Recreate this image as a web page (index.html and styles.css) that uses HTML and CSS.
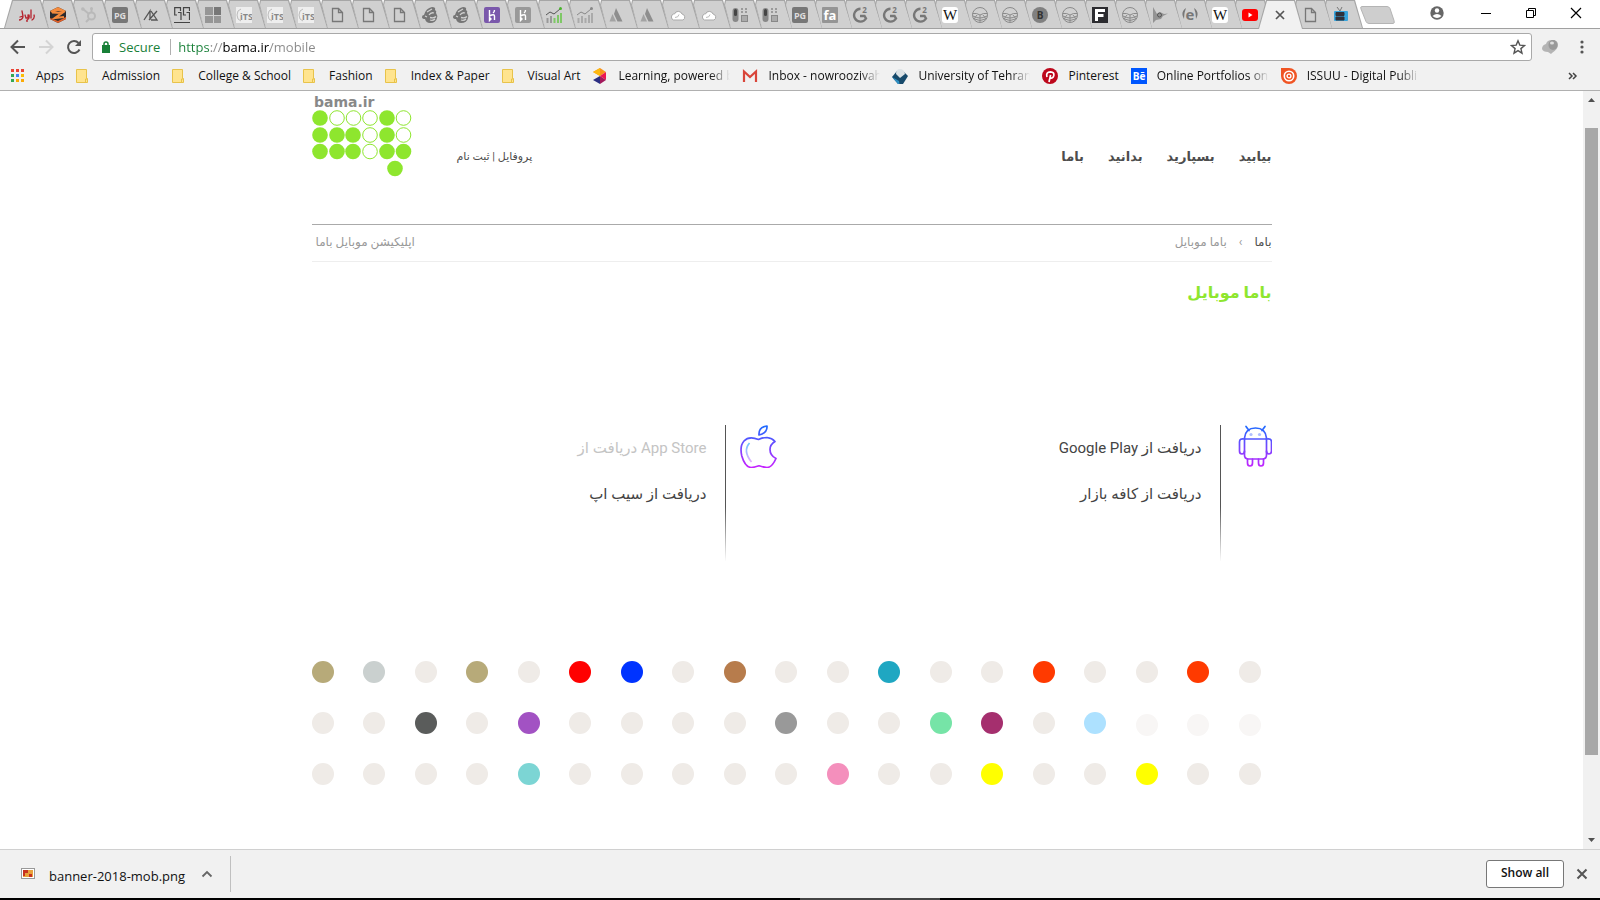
FILE: index.html
```html
<!DOCTYPE html>
<html lang="fa">
<head>
<meta charset="utf-8">
<title>باما موبایل</title>
<link rel="stylesheet" href="styles.css">
</head>
<body>
<svg class="defs" aria-hidden="true">
  <defs>
    <linearGradient id="violet" gradientUnits="userSpaceOnUse" x1="0" y1="0" x2="0" y2="43"><stop offset="0" stop-color="#1a6dff"/><stop offset="1" stop-color="#c822ff"/></linearGradient>
    <linearGradient id="sky" x1="0" y1="0" x2="0" y2="1"><stop offset="0" stop-color="#6dc7ff"/><stop offset="1" stop-color="#e6abff"/></linearGradient>
    <symbol id="i-divar" viewBox="0 0 16 16"><g fill="none" stroke="#b5232d" stroke-width="1.300" stroke-linecap="round"><path d="M3 4l1 5-3 1M0 13q3 0 4-3M6 8l1 3h2l0-3M10 8q1 4-2 5M12 3v8M15 8q1 3-2 5"/></g><circle cx="8" cy="14" r=".900" fill="#b5232d"/></symbol>
    <symbol id="i-z" viewBox="0 0 16 16"><path d="M8 0l8 4v8l-8 4-8-4V4z" fill="#2b2a2e"/><path d="M8 0l8 4-2 1.500L8 4 2 6 0 4z" fill="#f58a3c"/><path d="M2 5.500l10 .500-7 5 9-1" fill="none" stroke="#f58a3c" stroke-width="2.200"/><path d="M0 11l8 3 8-4v2l-8 4-8-4z" fill="#e2622b"/></symbol>
    <symbol id="i-hub" viewBox="0 0 16 16"><g fill="none" stroke="#b9b9b9" stroke-width="2"><circle cx="10.500" cy="9" r="3.500"/><path d="M10.500 5V1M8 7L2 2M8 12l-3 3"/></g><circle cx="1.800" cy="2" r="1.800" fill="#b9b9b9"/><circle cx="10.500" cy="1.500" r="1.500" fill="#b9b9b9"/></symbol>
    <symbol id="i-pg" viewBox="0 0 16 16"><rect width="16" height="16" rx="2" fill="#777"/><text x="8" y="11.500" class="glyph" font-size="9" fill="#ddd">PG</text></symbol>
    <symbol id="i-ax" viewBox="0 0 16 16"><path d="M1 13L7 4v9M6 13l8-9M8 4l6 9H8" fill="none" stroke="#555" stroke-width="1.300"/></symbol>
    <symbol id="i-gg" viewBox="0 0 16 16"><path d="M6.500 4V.700H.700V8H3M4 5.500h3V13M15.500 4V.700H9.500V8H12M12.500 5.500h3V13M0 15.500h16" fill="none" stroke="#444" stroke-width="1.200"/></symbol>
    <symbol id="i-win" viewBox="0 0 16 16"><path d="M0 0h8v8H0zM9 9h7v7H9zM0 9h8v7H0z" fill="#969696"/><path d="M9 0h7v8H9z" fill="#777"/></symbol>
    <symbol id="i-its" viewBox="0 0 16 16"><rect width="16" height="16" fill="#eee"/><path d="M5 2Q1 3 1 8t4 6" fill="none" stroke="#bbb"/><text x="10.500" y="13" class="glyph" font-size="9" fill="#888">iTS</text></symbol>
    <symbol id="i-doc" viewBox="0 0 16 16"><path d="M3.500 1.500h6l4 4v9h-10zM9.500 1.500v4h4" fill="none" stroke="#777" stroke-width="1.300"/></symbol>
    <symbol id="i-chimp" viewBox="0 0 16 16"><path d="M2 8Q4 1 10 0q4 0 3 3 2 1 1 3 2 3 1 5-1 5-7 5-4 0-5-4-3 0-3-2 0-2 2-2z" fill="#757575"/><path d="M7 8q2-3 5-2M8 10.500q4 1 6-1M8 13q3 1 5-1M5 5l5-3M3 9l2 1" stroke="#d0d0d0" stroke-width="1.300" fill="none"/></symbol>
    <symbol id="i-heroku" viewBox="0 0 16 16"><rect width="16" height="16" rx="2" fill="#7a58ab"/><path d="M5.500 3v6q5-2.500 5 0v4M10.500 3q0 2-1.500 3M5.500 10.500v3l1.500-1.500z" fill="none" stroke="#fff" stroke-width="1.400"/></symbol>
    <symbol id="i-heroku-grey" viewBox="0 0 16 16"><rect width="16" height="16" rx="2" fill="#999"/><path d="M5.500 3v6q5-2.500 5 0v4M10.500 3q0 2-1.500 3M5.500 10.500v3l1.500-1.500z" fill="none" stroke="#fff" stroke-width="1.400"/></symbol>
    <symbol id="i-chart" viewBox="0 0 16 16"><path d="M1.500 16v-5M5 16V9" stroke="#999" stroke-width="2"/><path d="M8.500 16v-5M12 16V8M15 16V6" stroke="#7fc867" stroke-width="2"/><path d="M0 8l4-3 4 2 6-5" fill="none" stroke="#555"/><circle cx="14.500" cy="1.500" r="1.500" fill="#49b52b"/></symbol>
    <symbol id="i-chart-grey" viewBox="0 0 16 16"><path d="M1.500 16v-5M5 16V9M8.500 16v-5M12 16V8M15 16V6" stroke="#aaa" stroke-width="2"/><path d="M0 8l4-3 4 2 6-5" fill="none" stroke="#888"/><circle cx="14.500" cy="1.500" r="1.500" fill="#888"/></symbol>
    <symbol id="i-peak" viewBox="0 0 16 16"><path d="M8 1l6.500 13.500h-5L6 7z" fill="#8e8e8e"/><path d="M4.500 7L8 14.500H1.500z" fill="#a3a3a3"/></symbol>
    <symbol id="i-cloud" viewBox="0 0 16 16"><path d="M3.500 13a3.200 3.200 0 0 1 0-6h1a4 4 0 0 1 7.500 0 3.200 3.200 0 0 1 1 6z" fill="#fff" stroke="#aaa"/><path d="M5 10.500q3.500 0 4-3" fill="none" stroke="#bbb"/></symbol>
    <symbol id="i-remote" viewBox="0 0 16 16"><rect x=".500" y="1" width="6" height="14" rx="3" fill="#888"/><rect x="2" y="2" width="3" height="7" rx="1.500" fill="#444"/><path d="M9 2h2M13 2h2M9 5h2M13 5h2" stroke="#888" stroke-width="1.500"/><rect x="9.500" y="8.500" width="6" height="6" fill="#aaa" stroke="#888"/></symbol>
    <symbol id="i-fa" viewBox="0 0 16 16"><rect width="16" height="16" rx="1" fill="#959595"/><text x="8" y="12.500" class="glyph" font-size="13" fill="#fff">fa</text></symbol>
    <symbol id="i-g2" viewBox="0 0 16 16"><path d="M8.500 1.800A6.400 6.400 0 1 0 14 11.500L12.500 9H8" fill="none" stroke="#777" stroke-width="2.400"/><text x="12.500" y="5.500" class="glyph" font-size="8" fill="#777">2</text></symbol>
    <symbol id="i-w" viewBox="0 0 16 16"><rect width="16" height="16" rx="3" fill="#fff"/><text x="8" y="13" class="glyph-serif" font-size="15" fill="#111">W</text></symbol>
    <symbol id="i-globe" viewBox="0 0 16 16"><g fill="none" stroke="#8a8a8a"><circle cx="8" cy="8" r="7.500"/><path d="M.500 6.500h4q3.500 3 7 0h4M1 9q7 4 14 0M2.500 12q5.500 3 11 0M5 8l-3 4M11 8l3 4M8 8v7"/></g></symbol>
    <symbol id="i-b" viewBox="0 0 16 16"><circle cx="8" cy="8" r="8" fill="#808080"/><text x="8" y="12" class="glyph" font-size="10" fill="#333">B</text></symbol>
    <symbol id="i-f" viewBox="0 0 16 16"><rect width="16" height="16" fill="#2c2c30"/><path d="M4.500 14V3.500H13M4.500 8.500h7" fill="none" stroke="#fff" stroke-width="3"/></symbol>
    <symbol id="i-gnu" viewBox="0 0 16 16"><path d="M1 0l4 7 3-2 4 2 4-.500-5 2.500-2 3-5 1-3 3V9z" fill="#949494"/><circle cx="7.500" cy="8" r="2" fill="none" stroke="#555"/></symbol>
    <symbol id="i-e" viewBox="0 0 16 16"><text x="8" y="13" class="glyph" font-size="15" fill="#777">e</text><path d="M4 1Q-2 5 2 12L2.500 6zM12 1q6 4 2 11l-.500-6z" fill="#777"/></symbol>
    <symbol id="i-yt" viewBox="0 0 16 16"><rect x="0" y="2" width="16" height="12" rx="3" fill="#f00"/><path d="M6.500 5.500v5l4-2.500z" fill="#fff"/></symbol>
    <symbol id="i-x" viewBox="0 0 16 16"><path d="M4 4l8 8M12 4l-8 8" stroke="#555" stroke-width="1.700"/></symbol>
    <symbol id="i-tv" viewBox="0 0 16 16"><path d="M5 0l3 4 2-4" fill="none" stroke="#777"/><rect x="2" y="4" width="14" height="10" rx="1" fill="#37a4dc"/><path d="M4 5.500h8v3H4zM4 10h8v3H4z" fill="#303038" stroke="#303038"/></symbol>
    <symbol id="i-folder" viewBox="0 0 16 16"><path d="M.500 1.500h10v9h1v4H.500z" fill="#ffe48f" stroke="#e8c34a"/><path d="M9.500 14v-3h1.500" fill="none" stroke="#e8c34a"/></symbol>
  </defs>
</svg>

<header class="browser">
  <div class="strip">
    <nav class="tabs" aria-label="Tabs">
      <button class="tab first" aria-label="Divar"><svg><use href="#i-divar"/></svg></button>
      <button class="tab" aria-label="Z"><svg><use href="#i-z"/></svg></button>
      <button class="tab" aria-label="Hub"><svg><use href="#i-hub"/></svg></button>
      <button class="tab" aria-label="PG"><svg><use href="#i-pg"/></svg></button>
      <button class="tab" aria-label="AX"><svg><use href="#i-ax"/></svg></button>
      <button class="tab" aria-label="GG"><svg><use href="#i-gg"/></svg></button>
      <button class="tab" aria-label="Tiles"><svg><use href="#i-win"/></svg></button>
      <button class="tab" aria-label="ITS"><svg><use href="#i-its"/></svg></button>
      <button class="tab" aria-label="ITS"><svg><use href="#i-its"/></svg></button>
      <button class="tab" aria-label="ITS"><svg><use href="#i-its"/></svg></button>
      <button class="tab" aria-label="Page"><svg><use href="#i-doc"/></svg></button>
      <button class="tab" aria-label="Page"><svg><use href="#i-doc"/></svg></button>
      <button class="tab" aria-label="Page"><svg><use href="#i-doc"/></svg></button>
      <button class="tab" aria-label="Mail"><svg><use href="#i-chimp"/></svg></button>
      <button class="tab" aria-label="Mail"><svg><use href="#i-chimp"/></svg></button>
      <button class="tab" aria-label="Heroku"><svg><use href="#i-heroku"/></svg></button>
      <button class="tab" aria-label="Heroku"><svg><use href="#i-heroku-grey"/></svg></button>
      <button class="tab" aria-label="Chart"><svg><use href="#i-chart"/></svg></button>
      <button class="tab" aria-label="Chart"><svg><use href="#i-chart-grey"/></svg></button>
      <button class="tab" aria-label="Peak"><svg><use href="#i-peak"/></svg></button>
      <button class="tab" aria-label="Peak"><svg><use href="#i-peak"/></svg></button>
      <button class="tab" aria-label="Cloud"><svg><use href="#i-cloud"/></svg></button>
      <button class="tab" aria-label="Cloud"><svg><use href="#i-cloud"/></svg></button>
      <button class="tab" aria-label="Remote"><svg><use href="#i-remote"/></svg></button>
      <button class="tab" aria-label="Remote"><svg><use href="#i-remote"/></svg></button>
      <button class="tab" aria-label="PG"><svg><use href="#i-pg"/></svg></button>
      <button class="tab" aria-label="fa"><svg><use href="#i-fa"/></svg></button>
      <button class="tab" aria-label="G2"><svg><use href="#i-g2"/></svg></button>
      <button class="tab" aria-label="G2"><svg><use href="#i-g2"/></svg></button>
      <button class="tab" aria-label="G2"><svg><use href="#i-g2"/></svg></button>
      <button class="tab" aria-label="Wikipedia"><svg><use href="#i-w"/></svg></button>
      <button class="tab" aria-label="Globe"><svg><use href="#i-globe"/></svg></button>
      <button class="tab" aria-label="Globe"><svg><use href="#i-globe"/></svg></button>
      <button class="tab" aria-label="B"><svg><use href="#i-b"/></svg></button>
      <button class="tab" aria-label="Globe"><svg><use href="#i-globe"/></svg></button>
      <button class="tab" aria-label="F"><svg><use href="#i-f"/></svg></button>
      <button class="tab" aria-label="Globe"><svg><use href="#i-globe"/></svg></button>
      <button class="tab" aria-label="Bird"><svg><use href="#i-gnu"/></svg></button>
      <button class="tab" aria-label="e"><svg><use href="#i-e"/></svg></button>
      <button class="tab" aria-label="Wikipedia"><svg><use href="#i-w"/></svg></button>
      <button class="tab" aria-label="YouTube"><svg><use href="#i-yt"/></svg></button>
      <button class="tab active" aria-label="Close tab"><svg><use href="#i-x"/></svg></button>
      <button class="tab" aria-label="Page"><svg><use href="#i-doc"/></svg></button>
      <button class="tab" aria-label="TV"><svg><use href="#i-tv"/></svg></button>
    </nav>
    <button class="new-tab" aria-label="New tab"><svg viewBox="0 0 35 18"><path d="M2 .500h25q2 0 3 2l4 12q1 3-1 3H9q-2 0-3-2L1 3Q0 .500 2 .500z" fill="#cecece" stroke="#b4b4b4"/></svg></button>
    <div class="window-buttons">
      <button aria-label="Profile"><svg viewBox="0 0 16 16"><circle cx="8" cy="8" r="6.700" fill="#666"/><circle cx="8" cy="5.500" r="2.200" fill="#fff"/><path d="M3.500 11q4.500-4 9 0-4.500 4-9 0z" fill="#fff"/></svg></button>
      <button aria-label="Minimize"><svg viewBox="0 0 16 16"><path d="M3 8.500h10" stroke="#000"/></svg></button>
      <button aria-label="Restore"><svg viewBox="0 0 16 16"><path d="M3.500 5.500h7v7h-7zM5.500 5V3.500h7v7H11" fill="none" stroke="#000"/></svg></button>
      <button aria-label="Close"><svg viewBox="0 0 16 16"><path d="M3 3l10 10M13 3L3 13" stroke="#000" stroke-width="1.200"/></svg></button>
    </div>
  </div>

  <div class="toolbar">
    <button aria-label="Back"><svg viewBox="0 0 16 16"><path d="M15 8H2M8 1.500L1.500 8 8 14.500" fill="none" stroke="#555" stroke-width="2"/></svg></button>
    <button aria-label="Forward"><svg viewBox="0 0 16 16"><path d="M1 8h13M8 1.500L14.500 8 8 14.500" fill="none" stroke="#d4d4d4" stroke-width="2"/></svg></button>
    <button aria-label="Reload"><svg viewBox="0 0 16 16"><path d="M13.500 10.500a6 6 0 1 1-1-6.500" fill="none" stroke="#555" stroke-width="2"/><path d="M15 1v6H9z" fill="#555"/></svg></button>
    <form class="omnibox">
      <svg class="lock" viewBox="0 0 10 14"><rect x="1" y="5" width="8" height="8" fill="#188038"/><path d="M3 6V4a2 2 0 0 1 4 0v2" fill="none" stroke="#188038" stroke-width="1.500"/></svg>
      <label class="secure" for="address">Secure</label>
      <input id="address" class="address" type="text" value="https://bama.ir/mobile">
      <button type="button" class="star" aria-label="Bookmark"><svg viewBox="0 0 16 16"><path d="M8 1.800l1.800 4.300 4.700.400-3.600 3.100 1.100 4.600L8 11.700l-4 2.500 1.100-4.600L1.500 6.500l4.700-.400z" fill="none" stroke="#555" stroke-width="1.400"/></svg></button>
    </form>
    <button aria-label="Extension"><svg viewBox="0 0 16 16"><path d="M0 10q0-4 4-5 1-4 6-4 6 0 6 5 0 4-6 8l-1 1-3-2q-5 0-6-3z" fill="#b4b4b4"/><ellipse cx="11" cy="6" rx="4.500" ry="5" fill="#999"/><ellipse cx="10" cy="4" rx="2" ry="1.500" fill="#ddd"/></svg></button>
    <button class="menu" aria-label="Menu"><svg viewBox="0 0 16 16"><g fill="#555"><circle cx="8" cy="3" r="1.600"/><circle cx="8" cy="8" r="1.600"/><circle cx="8" cy="13" r="1.600"/></g></svg></button>
  </div>

  <nav class="bookmarks" aria-label="Bookmarks">
    <a href="#"><svg viewBox="0 0 16 16"><path d="M1 1h3v3H1zM6 1h3v3H6zM11 1h3v3h-3z" fill="#ea4335"/><path d="M1 6h3v3H1z" fill="#34a853"/><path d="M6 6h3v3H6z" fill="#4285f4"/><path d="M11 6h3v3h-3z" fill="#fbbc05"/><path d="M1 11h3v3H1z" fill="#34a853"/><path d="M6 11h3v3H6zM11 11h3v3h-3z" fill="#fbaa05"/></svg><span>Apps</span></a>
    <a href="#"><svg><use href="#i-folder"/></svg><span>Admission</span></a>
    <a href="#"><svg><use href="#i-folder"/></svg><span>College &amp; School</span></a>
    <a href="#"><svg><use href="#i-folder"/></svg><span>Fashion</span></a>
    <a href="#"><svg><use href="#i-folder"/></svg><span>Index &amp; Paper</span></a>
    <a href="#"><svg><use href="#i-folder"/></svg><span>Visual Art</span></a>
    <a href="#"><svg viewBox="0 0 16 16"><path d="M8 0l6 4-6 4-7-4z" fill="#f7941d"/><path d="M8 0v8L1 4z" fill="#fdb913"/><path d="M14 4v8l-6-4z" fill="#ed1651"/><path d="M8 8l6 4-6 4z" fill="#a3195b"/><path d="M8 8v8l-7-4z" fill="#2b2e83"/></svg><span class="fade">Learning, powered b</span></a>
    <a href="#"><svg viewBox="0 0 16 16"><path d="M2 3h12v11H2z" fill="#f1f1f1"/><path d="M2 14V3.500l6 5.500 6-5.500V14" fill="none" stroke="#d9453a" stroke-width="2.200"/></svg><span class="fade">Inbox - nowroozivah</span></a>
    <a href="#"><svg viewBox="0 0 16 16"><path d="M0 9l5-6h6l5 5-5 8H6z" fill="#174a6b"/><path d="M0 9l7 4 .500 3H6z" fill="#2e90c4"/><path d="M4 6q0-5 4-5t5 5l-5 4z" fill="#dde3e6"/></svg><span class="fade">University of Tehran</span></a>
    <a href="#"><svg viewBox="0 0 16 16"><circle cx="8" cy="8" r="8" fill="#bd081c"/><path d="M7 14l1.600-7M5 9Q3.500 4 8.500 3.800q4 .200 3.300 3.700Q11 11 8 9.800" fill="none" stroke="#fff" stroke-width="1.700"/></svg><span>Pinterest</span></a>
    <a href="#"><svg viewBox="0 0 16 16"><rect width="16" height="16" fill="#0057ff"/><text x="8" y="12" class="glyph" font-size="10" fill="#fff">Bē</text></svg><span class="fade">Online Portfolios on</span></a>
    <a href="#"><svg viewBox="0 0 16 16"><path d="M0 0h8a8 8 0 1 1-8 8z" fill="#f05423"/><circle cx="8" cy="8" r="4.700" fill="none" stroke="#fff" stroke-width="1.600"/><circle cx="8" cy="8" r="1.900" fill="none" stroke="#fff" stroke-width="1.400"/></svg><span class="fade">ISSUU - Digital Publi</span></a>
    <button class="more" aria-label="More bookmarks"><svg viewBox="0 0 16 16"><path d="M4 5l3 3-3 3M8 5l3 3-3 3" fill="none" stroke="#444" stroke-width="1.500"/></svg></button>
  </nav>
</header>

<div class="viewport">
  <div class="page" dir="rtl">
    <header class="site-head">
      <nav class="menu-main">
        <a href="#">بیابید</a><a href="#">بسپارید</a><a href="#">بدانید</a><a href="#">باما</a>
      </nav>
      <div class="account"><a href="#">پروفایل</a> | <a href="#">ثبت نام</a></div>
      <a class="logo" href="#" aria-label="bama.ir">
        <svg viewBox="0 0 100 82">
          <text x="2" y="12" class="logo-name">bama.ir</text>
          <g fill="#8ee62e">
            <circle cx="8" cy="23" r="7.800"/><circle cx="75" cy="23" r="7.800"/>
            <circle cx="8" cy="40" r="7.800"/><circle cx="25" cy="40" r="7.800"/><circle cx="41" cy="40" r="7.800"/><circle cx="75" cy="40" r="7.800"/>
            <circle cx="8" cy="56.500" r="7.800"/><circle cx="25" cy="56.500" r="7.800"/><circle cx="41" cy="56.500" r="7.800"/><circle cx="75" cy="56.500" r="7.800"/><circle cx="91.500" cy="56.500" r="7.800"/>
            <circle cx="83" cy="73.500" r="7.800"/>
          </g>
          <g fill="none" stroke="#8ee62e">
            <circle cx="25" cy="23" r="7.300"/><circle cx="41.500" cy="23" r="7.300"/><circle cx="58" cy="23" r="7.300"/><circle cx="91.500" cy="23" r="7.300"/>
            <circle cx="58" cy="40" r="7.300"/><circle cx="91.500" cy="40" r="7.300"/><circle cx="58" cy="56.500" r="7.300"/>
          </g>
        </svg>
      </a>
    </header>

    <div class="crumbs">
      <nav><a href="#" class="home">باما</a><span class="sep">›</span><span>باما موبایل</span></nav>
      <span class="section">اپلیکیشن موبایل باما</span>
    </div>

    <h1>باما موبایل</h1>

    <main class="stores">
      <section class="store">
        <svg class="store-icon" viewBox="-2 0 37 43"><g fill="none" stroke="url(#violet)" stroke-width="1.700" stroke-linecap="round" stroke-linejoin="round"><path d="M9 1.500l3 4M28 1.500l-3 4M7.500 14V13Q8.500 3 18.500 3t11 10v1M7.500 14h22v16q0 4-4 4h-14q-4 0-4-4z"/><path d="M7.500 14q-5-1-5 3v9q0 3 2.500 3 2.500 0 2.500-3M29.500 14q5-1 5 3v9q0 3-2.500 3-2.500 0-2.500-3M10.500 34v4q0 3 2.500 3t2.500-3v-4M21.500 34v4q0 3 2.500 3t2.500-3v-4"/></g><circle cx="14" cy="9.500" r="1.600" fill="#b0bfff"/><circle cx="22.500" cy="9.500" r="1.600" fill="#b0bfff"/></svg>
        <div class="links"><a href="#">دریافت از Google Play</a><a href="#">دریافت از کافه بازار</a></div>
      </section>
      <section class="store">
        <svg class="store-icon" viewBox="0 0 37 43"><g fill="none" stroke="url(#violet)" stroke-width="1.700" stroke-linejoin="round"><path d="M19 10q-.500-8 8-9 .500 7-8 9z"/><path d="M18.500 14.500q4-2 8.500-2 5 .500 8 4-5 3-5 8 0 6 6 9-4 9-9 9-3 0-8-1.700Q14 42.500 11 42.500 5 42 1.800 31-.500 21 4 16q5-5.500 14.500-1.500z"/></g><path d="M9.500 18q-7 8 2 19" fill="none" stroke="url(#sky)" stroke-width="1.700"/></svg>
        <div class="links"><a href="#" class="off" dir="ltr">دریافت از App Store</a><a href="#">دریافت از سیب اپ</a></div>
      </section>
    </main>

    <div class="dots" dir="ltr" aria-hidden="true">
      <i class="khaki"></i><i class="silver"></i><i></i><i class="khaki"></i><i></i><i class="red"></i><i class="blue"></i><i></i><i class="brown"></i><i></i><i></i><i class="teal"></i><i></i><i></i><i class="orange"></i><i></i><i></i><i class="orange"></i><i></i>
      <i></i><i></i><i class="slate"></i><i></i><i class="purple"></i><i></i><i></i><i></i><i></i><i class="grey"></i><i></i><i></i><i class="mint"></i><i class="plum"></i><i></i><i class="ice"></i><i class="pale"></i><i class="pale"></i><i class="pale"></i>
      <i></i><i></i><i></i><i></i><i class="aqua"></i><i></i><i></i><i></i><i></i><i></i><i class="pink"></i><i></i><i></i><i class="yellow"></i><i></i><i></i><i class="yellow"></i><i></i><i></i>
    </div>
  </div>
  <div class="scrollbar" aria-hidden="true">
    <svg viewBox="0 0 17 17"><path d="M5 11l3.500-4 3.500 4z" fill="#505050"/></svg>
    <div class="track"><div class="thumb"></div></div>
    <svg viewBox="0 0 17 17"><path d="M5 6l3.500 4L12 6z" fill="#505050"/></svg>
  </div>
</div>

<footer class="downloads">
  <svg class="file-icon" viewBox="0 0 14 12"><rect x=".500" y=".500" width="13" height="10" fill="#fff" stroke="#999"/><path d="M2 2h10v7H2z" fill="#e9a13b"/><path d="M2 2h5v3H4v3H2zM8 6h3v3H8z" fill="#c8321f"/></svg>
  <span class="file-name">banner-2018-mob.png</span>
  <button class="chevron" aria-label="File options"><svg viewBox="0 0 16 16"><path d="M3.500 10.500L8 6l4.500 4.500" fill="none" stroke="#666" stroke-width="1.800"/></svg></button>
  <button class="show-all">Show all</button>
  <button class="dismiss" aria-label="Close downloads"><svg viewBox="0 0 16 16"><path d="M3.500 3.500l9 9M12.500 3.500l-9 9" stroke="#555" stroke-width="2"/></svg></button>
</footer>
<div class="taskbar"><div class="task"></div></div>
</body>
</html>
```

FILE: styles.css
```css
* { box-sizing: border-box; }
body {
  margin: 0;
  height: 100vh;
  display: flex;
  flex-direction: column;
  overflow: hidden;
  background: #fff;
  font-family: "Open Sans", "DejaVu Sans", sans-serif;
  font-size: 12px;
  color: #111;
}
button { border: 0; padding: 0; background: none; font: inherit; color: inherit; }
a { color: inherit; text-decoration: none; }
svg { display: block; width: 16px; height: 16px; }
.defs { position: absolute; width: 0; height: 0; }
.glyph { font-family: "Open Sans", sans-serif; font-weight: 700; text-anchor: middle; }
.glyph-serif { font-family: "Liberation Serif", serif; text-anchor: middle; }

/* tab strip */
.browser { flex: none; background: #f1f1f1; border-bottom: 1px solid #b0b0b0; }
.strip { display: flex; height: 29px; background: #fff; border-bottom: 1px solid #a0a0a0; }
.tabs { display: flex; padding-left: 11px; }
.tab { position: relative; flex: none; width: 31px; height: 28px; display: grid; place-items: center; padding-top: 2px; }
.tab:nth-child(n+25) { width: 30px; }
.tab::before, .tab::after { content: ""; position: absolute; top: 0; left: -7px; width: 45px; height: 28px; }
.tab::before { background: #a6a6a6; clip-path: polygon(7px 5px, 8px 0, 37px 0, 45px 28px, 14px 28px); }
.tab::after { background: #d0d0d0; clip-path: polygon(8px 5px, 9px 1px, 36px 1px, 44px 28px, 14px 28px); }
.tab.first::before { clip-path: polygon(8px 0, 37px 0, 45px 28px, 0 28px); }
.tab.first::after { clip-path: polygon(9px 1px, 36px 1px, 44px 28px, 1px 28px); }
.tab.active { z-index: 2; }
.tab.active::before { height: 29px; clip-path: polygon(8px 0, 37px 0, 45px 29px, 0 29px); }
.tab.active::after { height: 29px; background: #f1f1f1; clip-path: polygon(9px 1px, 36px 1px, 44px 29px, 1px 29px); }
.tab svg { position: relative; z-index: 1; }
.new-tab { align-self: center; margin: 2px 0 0 5px; }
.new-tab svg { width: 35px; height: 18px; }
.window-buttons { display: flex; align-items: center; margin-left: auto; padding-right: 2px; height: 26px; }
.window-buttons button { width: 45px; display: grid; place-items: center; }
.window-buttons button:first-child { margin-right: 4px; }

/* toolbar */
.toolbar { display: flex; align-items: center; gap: 12px; padding: 4px 10px 0; }
.omnibox {
  flex: 1;
  display: flex;
  align-items: center;
  height: 28px;
  margin: 0 -2px 0 -2px;
  padding: 0 5px 0 8px;
  background: #fff;
  border: 1px solid #a9a9a9;
  border-radius: 3px;
  font-size: 13px;
}
.lock { width: 10px; height: 14px; }
.secure { margin-left: 8px; padding-right: 10px; color: #188038; border-right: 1px solid #b0b0b0; line-height: 16px; }
.address {
  flex: 1;
  margin-left: 7px;
  padding: 0;
  border: 0;
  outline: 0;
  font: inherit;
  line-height: 20px;
  color: transparent;
  background: linear-gradient(90deg, #188038 0 32px, #888 32px 45px, #000 45px 92px, #888 92px);
  -webkit-background-clip: text;
  background-clip: text;
}
.toolbar .menu { margin-left: 4px; }

/* bookmarks */
.bookmarks { display: flex; align-items: center; height: 29px; padding: 0 19px 0 10px; gap: 12px; }
.bookmarks a { display: flex; align-items: center; gap: 10px; white-space: nowrap; line-height: 18px; }
.bookmarks a svg { flex: none; }
.bookmarks .fade { flex: none; width: 112px; -webkit-mask-image: linear-gradient(90deg, #000 92px, transparent); mask-image: linear-gradient(90deg, #000 92px, transparent); }
.more { margin-left: auto; }

/* page */
.viewport { flex: 1; min-height: 0; display: flex; }
.page { flex: 1; max-width: 960px; margin: 0 auto; font-family: Roboto, "DejaVu Sans", sans-serif; color: #4d4d4d; }
.site-head { display: flex; align-items: flex-end; padding: 4px 0 47px; border-bottom: 1px solid #aaa; }
.menu-main { display: flex; gap: 24px; margin: 0 0 10px auto; font-size: 13px; font-weight: 700; line-height: 20px; }
.account { margin: 0 0 10px 45px; font-size: 11px; line-height: 20px; }
.logo svg { width: 100px; height: 82px; }
.logo-name { font-family: "DejaVu Sans", sans-serif; font-weight: 700; font-size: 14px; fill: #888; direction: ltr; }
.crumbs { display: flex; justify-content: space-between; padding: 7px 0 9px; border-bottom: 1px solid #eee; line-height: 20px; color: #999; }
.crumbs .home { color: #4d4d4d; }
.sep { margin: 0 12px; }
.section { padding-left: 4px; }
h1 { margin: 16px 0 0; font-size: 16px; line-height: 30px; color: #8ee62e; }
.stores { display: grid; grid-template-columns: 495px 1fr; margin-top: 117px; }
.store { display: flex; align-items: flex-start; }
.store-icon { width: 37px; height: 43px; }
.links {
  display: flex;
  flex-direction: column;
  gap: 22px;
  height: 136px;
  margin-right: 14px;
  padding: 11px 18px 0 0;
  border-right: 1px solid;
  border-image: linear-gradient(#555 60%, #fff) 1;
  font-size: 15px;
  line-height: 24px;
  color: #444;
}
.links .off { color: #c4c4c4; }
.dots { display: grid; grid-template-columns: repeat(19, 22px); justify-content: space-between; row-gap: 29px; margin-top: 100px; padding-right: 11px; }
.dots i { width: 22px; height: 22px; border-radius: 50%; background: #efebe7; }
.dots .khaki { background: #b7aa79; }
.dots .silver { background: #cad0cf; }
.dots .red { background: #f00; }
.dots .blue { background: #03f; }
.dots .brown { background: #b77c4c; }
.dots .teal { background: #1fa7c2; }
.dots .orange { background: #ff3a00; }
.dots .slate { background: #5a5c5b; }
.dots .purple { background: #a252c3; }
.dots .grey { background: #999; }
.dots .mint { background: #76e4a7; }
.dots .plum { background: #a52f6e; }
.dots .ice { background: #ade1ff; }
.dots .pale { background: #f8f6f5; margin: 2px 0 -2px; }
.dots .aqua { background: #7cd5d4; }
.dots .pink { background: #f48fbc; }
.dots .yellow { background: #ff0; }

.scrollbar { flex: none; width: 17px; display: flex; flex-direction: column; background: #f1f1f1; }
.scrollbar svg { width: 17px; height: 17px; }
.track { flex: 1; padding: 20px 2px 0; }
.thumb { height: 89%; background: #a8a8a8; }

/* download shelf */
.downloads { flex: none; display: flex; align-items: center; height: 49px; padding: 0 10px 0 21px; background: #f1f1f1; border-top: 1px solid #d0d0d0; font-size: 13px; }
.file-icon { width: 14px; height: 12px; }
.file-name { margin-left: 14px; line-height: 20px; padding-top: 4px; }
.chevron { height: 36px; margin-left: 14px; padding-right: 15px; border-right: 1px solid #c0c0c0; }
.show-all { margin-left: auto; width: 78px; height: 28px; background: #fff; border: 1px solid #777; border-radius: 3px; font-size: 12px; font-weight: 600; line-height: 18px; padding-bottom: 2px; }
.dismiss { margin-left: 10px; }
.taskbar { flex: none; height: 2px; background: #000; }
.task { width: 140px; height: 2px; margin-left: 50%; background: #444; }
```
